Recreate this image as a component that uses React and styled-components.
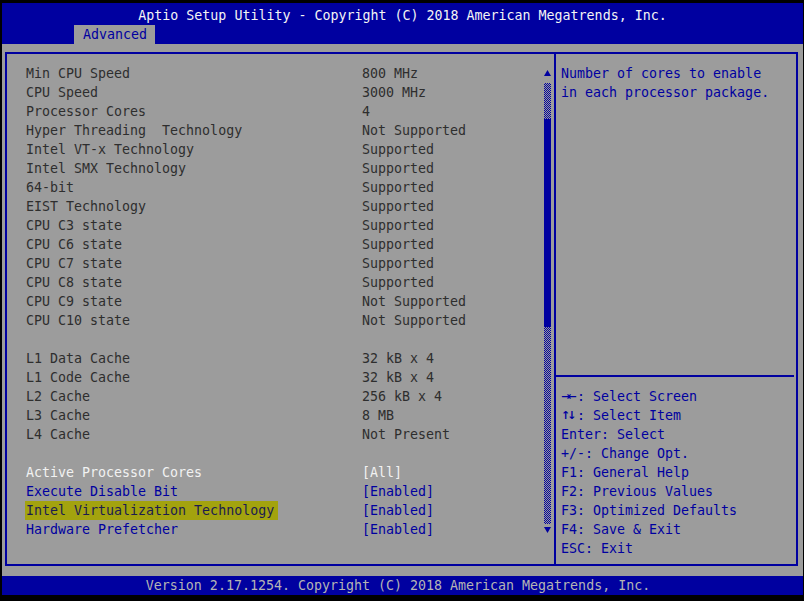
import React from 'react';
import styled, { createGlobalStyle } from 'styled-components';

const BLUE = '#0000a0';
const GRAY = '#9c9c9c';

const Global = createGlobalStyle`
  html, body { margin: 0; padding: 0; background: #000; }
  body { font-family: "DejaVu Sans Mono", "Liberation Mono", monospace; }
`;

const Screen = styled.div`
  width: 804px;
  height: 601px;
  box-sizing: border-box;
  padding: 3px 1px 6px 2px;
  background: #000;
  display: flex;
  flex-direction: column;
  font-family: "DejaVu Sans Mono", "Liberation Mono", monospace;
  font-size: 13.3px;
  line-height: 19px;
  white-space: pre;
`;

const Header = styled.header`
  height: 41px;
  background: ${BLUE};
  display: flex;
  flex-direction: column;
`;

const Title = styled.div`
  height: 22px;
  box-sizing: border-box;
  padding-top: 3px;
  text-align: center;
  color: #f4f4f4;
`;

const TabRow = styled.div`
  height: 19px;
  display: flex;
  padding-left: 72px;
`;

const Tab = styled.div`
  background: ${GRAY};
  color: ${BLUE};
  padding: 0 8px 0 9px;
  height: 19px;
`;

const Main = styled.main`
  flex: 1;
  background: ${GRAY};
  padding: 8px 5px 10px 3px;
  display: flex;
`;

const Frame = styled.div`
  flex: 1;
  border: 2px solid ${BLUE};
  display: flex;
`;

const LeftPanel = styled.section`
  flex: 1;
  display: flex;
  align-items: flex-start;
  padding: 10px 3px 0 19px;
`;

const Items = styled.div`
  flex: 1;
  display: flex;
  flex-direction: column;
`;

const colors = {
  static: '#2e2e2e',
  white: '#f2f2f2',
  blue: BLUE,
  selected: '#1c1c50',
};

const Row = styled.div`
  height: 19px;
  display: grid;
  grid-template-columns: 336px 1fr;
`;

const Label = styled.span`
  justify-self: start;
  color: ${(p) => colors[p.$kind]};
  ${(p) =>
    p.$kind === 'selected' &&
    `background: #a3a30e; margin-left: -1px; padding: 0 4px 0 1px;`}
`;

const Value = styled.span`
  color: ${(p) => (p.$kind === 'selected' ? BLUE : colors[p.$kind])};
`;

const Scrollbar = styled.div`
  width: 7px;
  height: 475px;
  display: flex;
  flex-direction: column;
`;

const ArrowCell = styled.div`
  height: ${(p) => p.$h}px;
  box-sizing: border-box;
  padding-top: ${(p) => p.$pad}px;
  display: flex;
  align-items: flex-start;
  justify-content: center;
`;

const Dotted = styled.div`
  flex: ${(p) => (p.$h ? `0 0 ${p.$h}px` : '1')};
  background-image: repeating-conic-gradient(${BLUE} 0 25%, transparent 0 50%);
  background-size: 2px 2px;
`;

const Thumb = styled.div`
  flex: 0 0 208px;
  background: ${BLUE};
`;

const RightPanel = styled.aside`
  width: 235px;
  border-left: 2px solid ${BLUE};
  display: flex;
  flex-direction: column;
  padding: 10px 0 6px 5px;
  color: ${BLUE};
`;

const HelpText = styled.div``;

const Spacer = styled.div`
  flex: 1;
`;

const Separator = styled.div`
  height: 2px;
  background: ${BLUE};
  margin: 0 2px 0 -5px;
`;

const Keys = styled.div`
  padding-top: 10px;
  display: flex;
  flex-direction: column;
`;

const KeyLine = styled.div`
  height: 19px;
  display: flex;
`;

const Glyph = styled.span`
  display: inline-block;
  width: 16px;
  font-family: "DejaVu Sans", sans-serif;
  font-size: 11px;
  letter-spacing: -3px;
  font-weight: bold;
  overflow: visible;
`;

const Footer = styled.footer`
  height: 19px;
  background: ${BLUE};
  color: #b4b4b4;
  text-align: center;
  padding-right: 9px;
`;

const rows = [
  ['Min CPU Speed', '800 MHz', 'static'],
  ['CPU Speed', '3000 MHz', 'static'],
  ['Processor Cores', '4', 'static'],
  ['Hyper Threading  Technology', 'Not Supported', 'static'],
  ['Intel VT-x Technology', 'Supported', 'static'],
  ['Intel SMX Technology', 'Supported', 'static'],
  ['64-bit', 'Supported', 'static'],
  ['EIST Technology', 'Supported', 'static'],
  ['CPU C3 state', 'Supported', 'static'],
  ['CPU C6 state', 'Supported', 'static'],
  ['CPU C7 state', 'Supported', 'static'],
  ['CPU C8 state', 'Supported', 'static'],
  ['CPU C9 state', 'Not Supported', 'static'],
  ['CPU C10 state', 'Not Supported', 'static'],
  null,
  ['L1 Data Cache', '32 kB x 4', 'static'],
  ['L1 Code Cache', '32 kB x 4', 'static'],
  ['L2 Cache', '256 kB x 4', 'static'],
  ['L3 Cache', '8 MB', 'static'],
  ['L4 Cache', 'Not Present', 'static'],
  null,
  ['Active Processor Cores', '[All]', 'white'],
  ['Execute Disable Bit', '[Enabled]', 'blue'],
  ['Intel Virtualization Technology', '[Enabled]', 'selected'],
  ['Hardware Prefetcher', '[Enabled]', 'blue'],
];

const keys = [
  ['→←', ': Select Screen'],
  ['↑↓', ': Select Item'],
  [null, 'Enter: Select'],
  [null, '+/-: Change Opt.'],
  [null, 'F1: General Help'],
  [null, 'F2: Previous Values'],
  [null, 'F3: Optimized Defaults'],
  [null, 'F4: Save & Exit'],
  [null, 'ESC: Exit'],
];

const Tri = ({ down }) => (
  <svg width="7" height="7" viewBox="0 0 7 7">
    <polygon points={down ? '0,1 7,1 3.5,7' : '3.5,0 7,6 0,6'} fill={BLUE} />
  </svg>
);

export default function App() {
  return (
    <>
      <Global />
      <Screen>
        <Header>
          <Title>Aptio Setup Utility - Copyright (C) 2018 American Megatrends, Inc.</Title>
          <TabRow>
            <Tab>Advanced</Tab>
          </TabRow>
        </Header>
        <Main>
          <Frame>
            <LeftPanel>
              <Items>
                {rows.map((r, i) =>
                  r ? (
                    <Row key={i}>
                      <Label $kind={r[2]}>{r[0]}</Label>
                      <Value $kind={r[2]}>{r[1]}</Value>
                    </Row>
                  ) : (
                    <Row key={i} />
                  )
                )}
              </Items>
              <Scrollbar>
                <ArrowCell $h={19} $pad={6}>
                  <Tri />
                </ArrowCell>
                <Dotted $h={36} />
                <Thumb />
                <Dotted />
                <ArrowCell $h={15} $pad={2}>
                  <Tri down />
                </ArrowCell>
              </Scrollbar>
            </LeftPanel>
            <RightPanel>
              <HelpText>{'Number of cores to enable\nin each processor package.'}</HelpText>
              <Spacer />
              <Separator />
              <Keys>
                {keys.map(([g, t], i) => (
                  <KeyLine key={i}>
                    {g && <Glyph>{g}</Glyph>}
                    <span>{t}</span>
                  </KeyLine>
                ))}
              </Keys>
            </RightPanel>
          </Frame>
        </Main>
        <Footer>Version 2.17.1254. Copyright (C) 2018 American Megatrends, Inc.</Footer>
      </Screen>
    </>
  );
}
